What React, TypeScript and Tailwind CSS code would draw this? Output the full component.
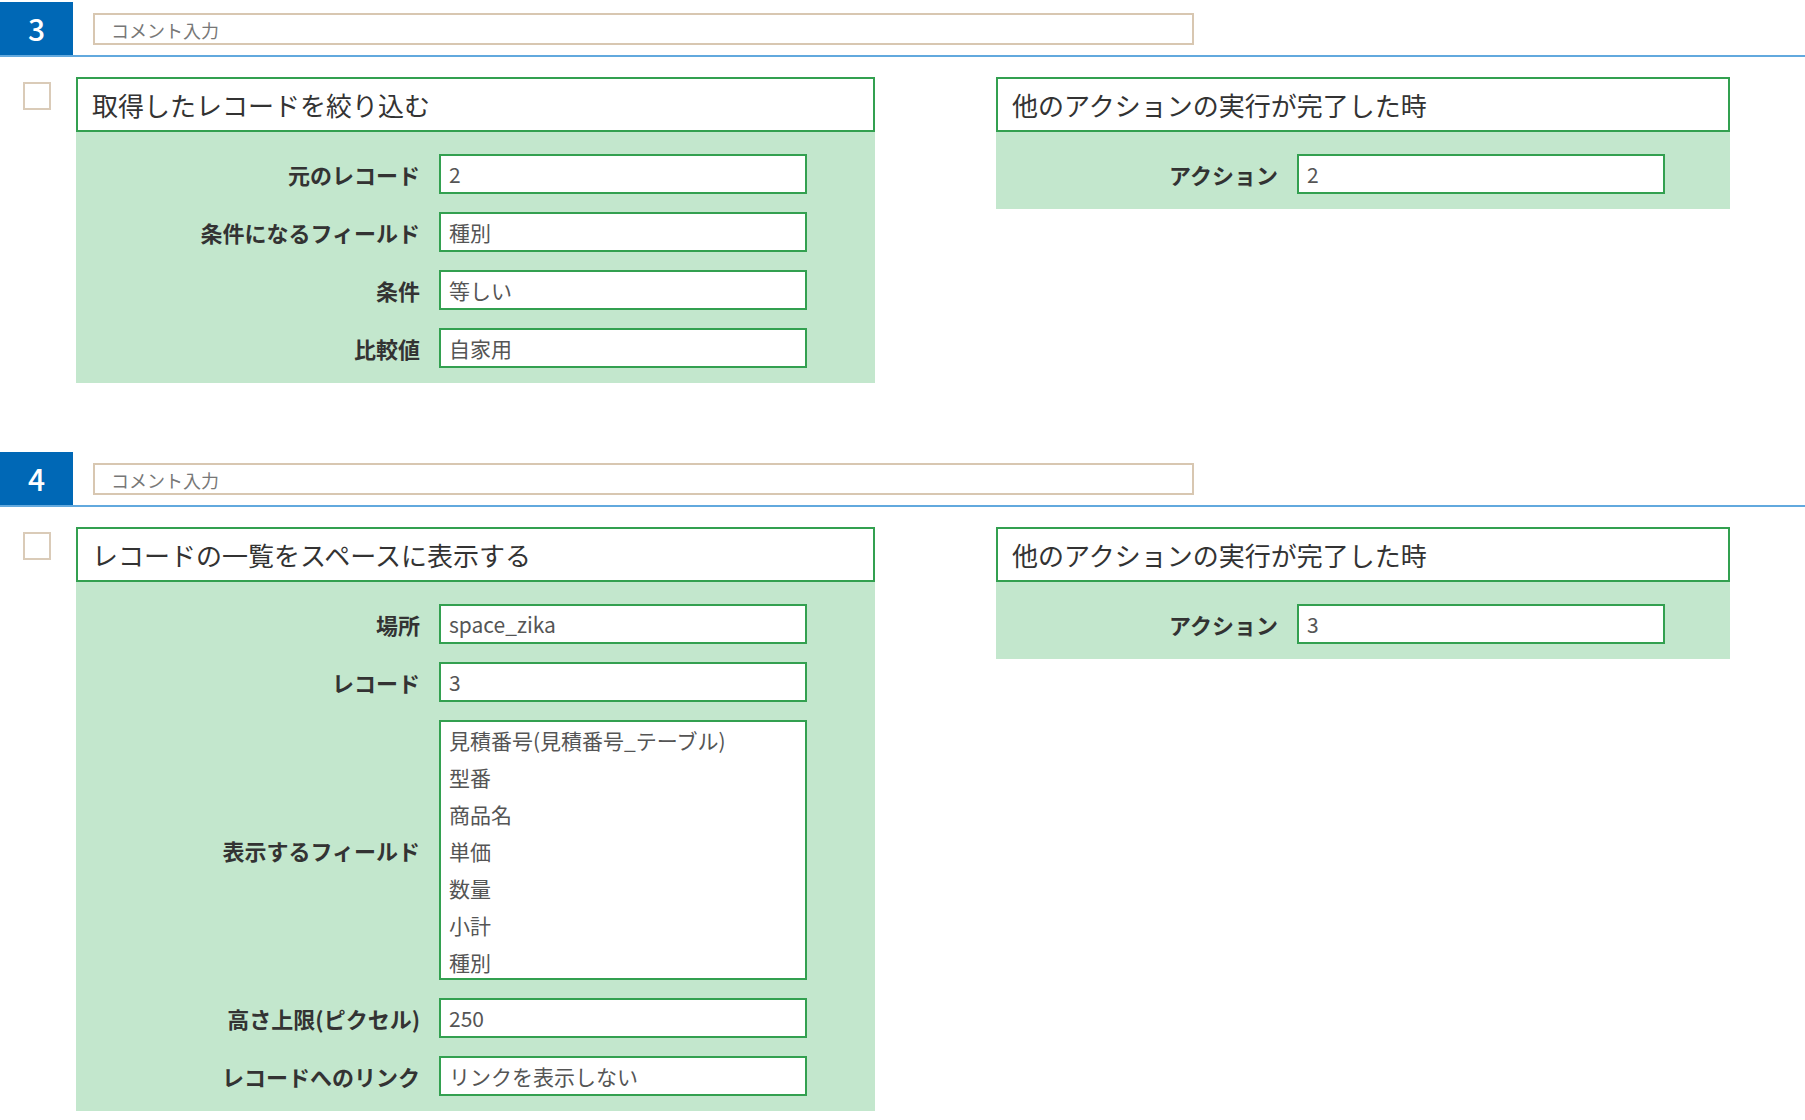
import React from "react";

type Row = { label: string; value?: string; items?: string[] };

type CardProps = {
  title: string;
  rows: Row[];
  wide?: boolean;
};

function Card({ title, rows, wide }: CardProps) {
  return (
    <div className={wide ? "w-[799px]" : "w-[734px]"}>
      <div className="flex h-[55px] items-center border-2 border-[#33a050] bg-white pl-[14px] text-[26px] text-[#333]">
        {title}
      </div>
      <div className="flex flex-col gap-[18px] bg-[#c3e7cd] pb-[15px] pt-[22px]">
        {rows.map((r) => (
          <div key={r.label} className="flex items-center">
            <div
              className={`${wide ? "w-[344px]" : "w-[282px]"} text-right text-[22px] font-bold text-[#333]`}
            >
              {r.label}
            </div>
            {r.items ? (
              <div className="ml-[19px] h-[260px] w-[368px] border-2 border-[#33a050] bg-white pl-[8px] text-[21px] leading-[37px] text-[#555]">
                {r.items.map((it) => (
                  <div key={it}>{it}</div>
                ))}
              </div>
            ) : (
              <div className="ml-[19px] flex h-[40px] w-[368px] items-center border-2 border-[#33a050] bg-white pl-[8px] pt-[2px] text-[21px] text-[#555]">
                {r.value}
              </div>
            )}
          </div>
        ))}
      </div>
    </div>
  );
}

type SectionProps = {
  num: string;
  left: CardProps;
  right: CardProps;
};

function Section({ num, left, right }: SectionProps) {
  return (
    <div>
      <div className="flex items-start border-b-2 border-[#62a9de]">
        <div className="flex h-[53px] w-[73px] items-center justify-center bg-[#0068b6] text-[30px] font-medium text-white">
          {num}
        </div>
        <div className="ml-[20px] mt-[11px] flex h-[32px] w-[1101px] items-center border-2 border-[#d8c7b1] pl-[16px] pt-[2px] text-[18px] text-[#777]">
          コメント入力
        </div>
      </div>
      <div className="mt-[20px] flex items-start">
        <div className="ml-[23px] mt-[5px] h-[28px] w-[28px] border-2 border-[#dacbb8] bg-white" />
        <div className="ml-[25px]">
          <Card {...left} wide />
        </div>
        <div className="ml-[121px]">
          <Card {...right} />
        </div>
      </div>
    </div>
  );
}

export default function App() {
  return (
    <div className="min-h-screen bg-white pt-[2px] font-['Noto_Sans_CJK_JP','Noto_Sans',sans-serif]">
      <Section
        num="3"
        left={{
          title: "取得したレコードを絞り込む",
          rows: [
            { label: "元のレコード", value: "2" },
            { label: "条件になるフィールド", value: "種別" },
            { label: "条件", value: "等しい" },
            { label: "比較値", value: "自家用" },
          ],
        }}
        right={{
          title: "他のアクションの実行が完了した時",
          rows: [{ label: "アクション", value: "2" }],
        }}
      />
      <div className="mt-[69px]">
        <Section
          num="4"
          left={{
            title: "レコードの一覧をスペースに表示する",
            rows: [
              { label: "場所", value: "space_zika" },
              { label: "レコード", value: "3" },
              {
                label: "表示するフィールド",
                items: ["見積番号(見積番号_テーブル)", "型番", "商品名", "単価", "数量", "小計", "種別"],
              },
              { label: "高さ上限(ピクセル)", value: "250" },
              { label: "レコードへのリンク", value: "リンクを表示しない" },
            ],
          }}
          right={{
            title: "他のアクションの実行が完了した時",
            rows: [{ label: "アクション", value: "3" }],
          }}
        />
      </div>
    </div>
  );
}
